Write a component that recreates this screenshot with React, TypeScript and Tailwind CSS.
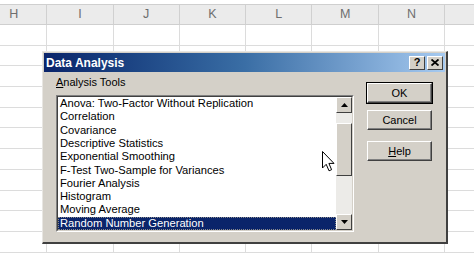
import React from "react"

const cols = ["H", "I", "J", "K", "L", "M", "N", ""]
const rows = Array.from({ length: 11 })

const tools = [
    "Anova: Two-Factor Without Replication",
    "Correlation",
    "Covariance",
    "Descriptive Statistics",
    "Exponential Smoothing",
    "F-Test Two-Sample for Variances",
    "Fourier Analysis",
    "Histogram",
    "Moving Average",
    "Random Number Generation",
]

const Win98Button: React.FC<{ children: React.ReactNode; isDefault?: boolean }> = ({ children, isDefault }) => (
    <div className={isDefault ? "border border-black" : "border border-transparent"}>
        <div className="h-[20px] flex items-center justify-center bg-[#d4d0c8] border-t border-l border-t-white border-l-white border-b border-r border-b-[#404040] border-r-[#404040] shadow-[inset_-1px_-1px_0_#808080] text-[11px] text-black">
            {children}
        </div>
    </div>
)

const ArrowBtn: React.FC<{ up?: boolean }> = ({ up }) => (
    <div className="w-[16px] h-[16px] bg-[#d4d0c8] border-t border-l border-t-white border-l-white border-b border-r border-b-[#404040] border-r-[#404040] flex items-center justify-center">
        <svg width="7" height="4" viewBox="0 0 7 4">
            {up ? <path d="M3.5 0 L7 4 L0 4 Z" fill="#000" /> : <path d="M0 0 L7 0 L3.5 4 Z" fill="#000" />}
        </svg>
    </div>
)

export default function App() {
    return (
        <div className="relative w-[474px] h-[266px] overflow-hidden bg-white" style={{ fontFamily: '"Liberation Sans", Arial, sans-serif' }}>
            {/* spreadsheet */}
            <div className="pt-[4px]">
                <div className="flex ml-[-19px] h-[21px] bg-[#ebebeb] border-t border-b border-[#cfcfcf]">
                    {cols.map((c, i) => (
                        <div key={i} className="w-[66.3px] shrink-0 border-r border-[#d0d0d0] flex items-center justify-center text-[12.5px] text-[#6e6e6e]">
                            {c}
                        </div>
                    ))}
                </div>
                {rows.map((_, i) => (
                    <div key={i} className="flex ml-[-19px] h-[20.7px] border-b border-[#dcdcdc]">
                        {cols.map((_, j) => (
                            <div key={j} className="w-[66.3px] shrink-0 border-r border-[#dcdcdc]" />
                        ))}
                    </div>
                ))}
            </div>

            {/* dialog */}
            <div className="absolute left-[42px] top-[51px] w-[406px] h-[193px] bg-[#d4d0c8] border-t border-l border-t-[#e8e6e2] border-l-[#e8e6e2] border-b-2 border-r-2 border-b-[#404040] border-r-[#404040] p-[1px]">
                <div className="h-[19px] flex items-center justify-between pl-[2px] pr-[2px] bg-gradient-to-r from-[#0a246a] via-[#3a6ea5] to-[#a6caf0]">
                    <span className="text-white font-bold text-[12px] leading-none">Data Analysis</span>
                    <div className="flex gap-[2px]">
                        <div className="w-[16px] h-[14px] bg-[#d4d0c8] border-t border-l border-t-white border-l-white border-b border-r border-b-[#404040] border-r-[#404040] flex items-center justify-center text-[11px] font-bold leading-none text-black">?</div>
                        <div className="w-[16px] h-[14px] bg-[#d4d0c8] border-t border-l border-t-white border-l-white border-b border-r border-b-[#404040] border-r-[#404040] flex items-center justify-center">
                            <svg width="8" height="7" viewBox="0 0 8 7">
                                <path d="M0.5 0.5 L7.5 6.5 M7.5 0.5 L0.5 6.5" stroke="#000" strokeWidth="1.8" />
                            </svg>
                        </div>
                    </div>
                </div>
                <div className="flex pl-[12px] pt-[4px]">
                    <div className="w-[298px]">
                        <div className="text-[11px] text-black h-[19px] leading-[13px]">
                            <span className="underline">A</span>nalysis Tools
                        </div>
                        <div className="flex h-[137px] border-t border-l border-t-[#808080] border-l-[#808080] border-b border-r border-b-white border-r-white">
                            <div className="flex flex-1 border-t border-l border-t-[#404040] border-l-[#404040] border-b border-r border-b-[#d4d0c8] border-r-[#d4d0c8] bg-white">
                                <div className="flex-1">
                                    {tools.map((t, i) => (
                                        <div
                                            key={t}
                                            className={`h-[13.3px] flex items-center pl-[2px] text-[11.2px] leading-none whitespace-nowrap ${i === tools.length - 1 ? "bg-[#0a246a] text-white outline outline-1 outline-dotted outline-[#8a8a8a] -outline-offset-1" : "text-black"}`}
                                        >
                                            {t}
                                        </div>
                                    ))}
                                </div>
                                <div className="w-[16px] flex flex-col bg-[#ecebe8]">
                                    <ArrowBtn up />
                                    <div className="h-[10px]" />
                                    <div className="h-[53px] bg-[#d4d0c8] border-t border-l border-t-white border-l-white border-b border-r border-b-[#404040] border-r-[#404040]" />
                                    <div className="flex-1" />
                                    <ArrowBtn />
                                </div>
                            </div>
                        </div>
                    </div>
                    <div className="ml-[12px] w-[67px] pt-[6px] flex flex-col">
                        <Win98Button isDefault>OK</Win98Button>
                        <div className="h-[5px]" />
                        <Win98Button>Cancel</Win98Button>
                        <div className="h-[9px]" />
                        <Win98Button>
                            <span>
                                <span className="underline">H</span>elp
                            </span>
                        </Win98Button>
                    </div>
                </div>
            </div>

            {/* mouse cursor */}
            <svg className="absolute left-[322px] top-[151px]" width="14" height="23" viewBox="0 0 14 23">
                <path d="M0.5 0.5 L0.5 17 L4.2 13.3 L7 19.8 L9.6 18.7 L6.9 12.4 L12 12.4 Z" fill="#fff" stroke="#000" strokeWidth="1" strokeLinejoin="round" />
            </svg>
        </div>
    )
}
